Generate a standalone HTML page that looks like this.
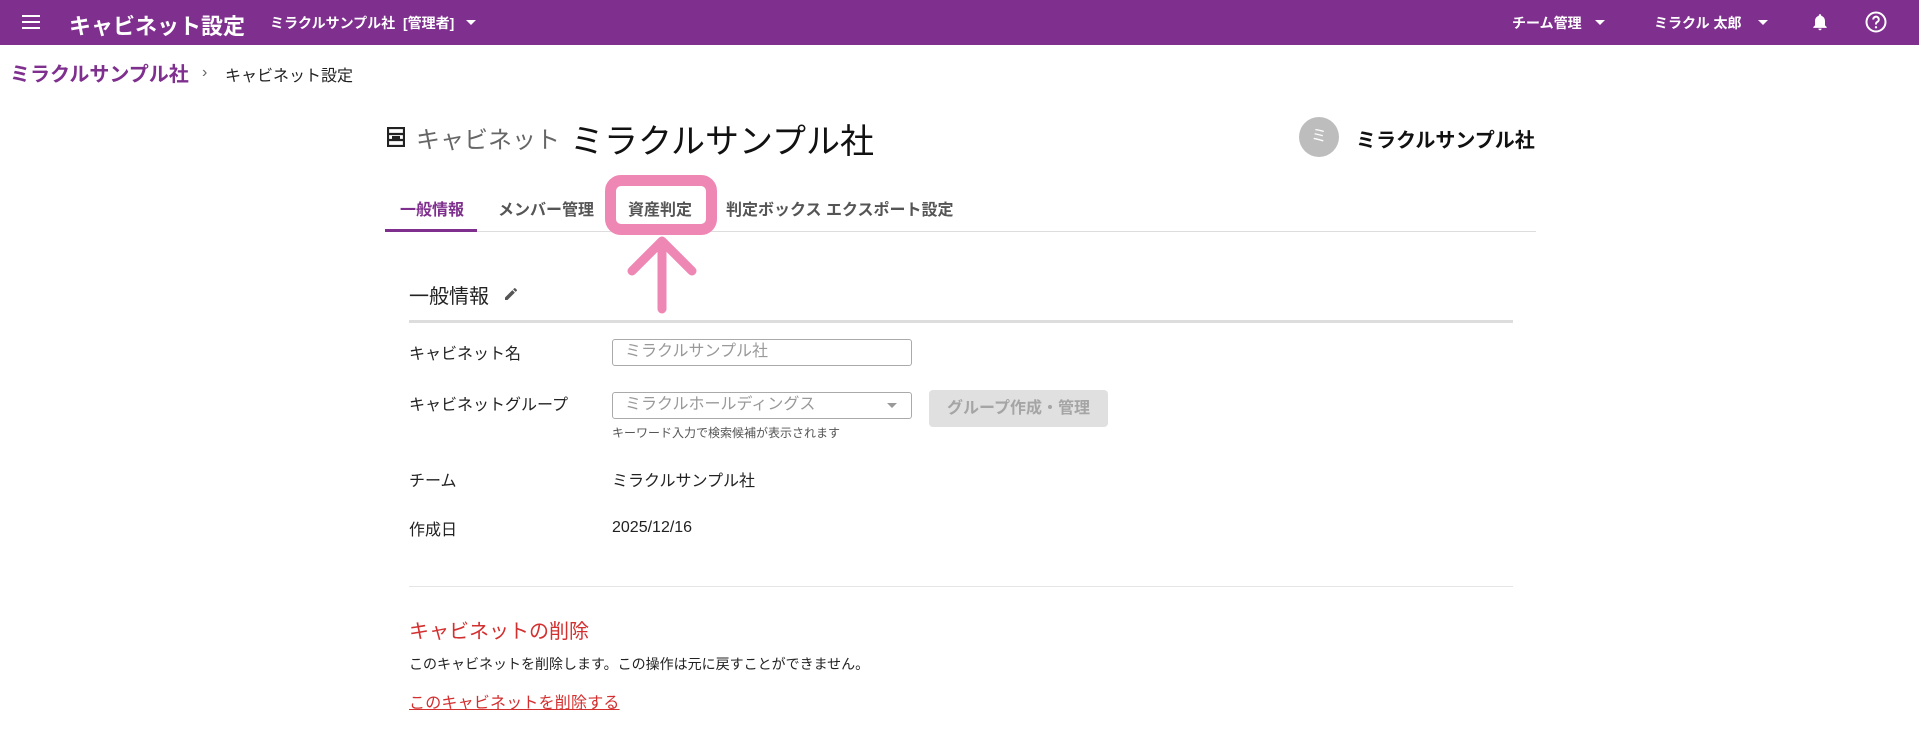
<!DOCTYPE html>
<html><head><meta charset="utf-8"><style>
*{margin:0;padding:0;box-sizing:border-box}
body{width:1919px;height:737px;overflow:hidden;background:#fff;font-family:"Liberation Sans","Noto Sans CJK JP",sans-serif;color:#222;position:relative}
.a{position:absolute;white-space:nowrap}
.hdr{position:absolute;left:0;top:0;width:1919px;height:45px;background:#7f2f8e;color:#fff}
.caret{position:absolute;width:0;height:0;border-left:5px solid transparent;border-right:5px solid transparent;border-top:5px solid #fff}
.lbl{font-size:16px;color:#222}
</style></head><body>
<div class="hdr">
 <div class="a" style="left:22px;top:15px;width:18px;height:2px;background:#fff"></div>
 <div class="a" style="left:22px;top:21px;width:18px;height:2px;background:#fff"></div>
 <div class="a" style="left:22px;top:27px;width:18px;height:2px;background:#fff"></div>
 <div class="a" style="left:69px;top:9px;font-size:22px;font-weight:bold">キャビネット設定</div>
 <div class="a" style="left:270px;top:13px;font-size:14px;font-weight:bold">ミラクルサンプル社&nbsp; [管理者]</div>
 <div class="caret" style="left:466px;top:20px"></div>
 <div class="a" style="left:1512px;top:13px;font-size:14px;font-weight:bold">チーム管理</div>
 <div class="caret" style="left:1595px;top:20px"></div>
 <div class="a" style="left:1654px;top:13px;font-size:14px;font-weight:bold">ミラクル 太郎</div>
 <div class="caret" style="left:1758px;top:20px"></div>
 <svg class="a" style="left:1810px;top:11px" width="20" height="22" viewBox="0 0 24 24"><path fill="#fff" d="M12 22c1.1 0 2-.9 2-2h-4c0 1.1.9 2 2 2zm6-6v-5c0-3.070-1.64-5.640-4.5-6.320V4c0-.83-.67-1.5-1.5-1.5s-1.5.67-1.5 1.5v.68C7.63 5.36 6 7.92 6 11v5l-2 2v1h16v-1l-2-2z"/></svg>
 <svg class="a" style="left:1864px;top:10px" width="24" height="24" viewBox="0 0 24 24"><circle cx="12" cy="12" r="9.5" fill="none" stroke="#fff" stroke-width="2"/><path d="M9.2 9.5a2.8 2.8 0 1 1 4 2.5c-.9.5-1.2 1-1.2 2v.5" fill="none" stroke="#fff" stroke-width="2"/><circle cx="12" cy="17.3" r="1.2" fill="#fff"/></svg>
</div>
<div class="a" style="left:10px;top:58px;font-size:20px;font-weight:bold;color:#7f2f8e">ミラクルサンプル社</div>
<div class="a" style="left:202px;top:64px;font-size:16px;color:#666">›</div>
<div class="a" style="left:225px;top:62px;font-size:16px;color:#222">キャビネット設定</div>

<svg class="a" style="left:387px;top:127px" width="18" height="20" viewBox="0 0 18 20"><path d="M1 1h16v18H1z M1 7h16 M1 13h16" fill="none" stroke="#222" stroke-width="2.2"/><rect x="5" y="9" width="8" height="3" fill="#222"/></svg>
<div class="a" style="left:416px;top:120px;font-size:24px;color:#666">キャビネット</div>
<div class="a" style="left:570px;top:114px;font-size:34px;color:#111">ミラクルサンプル社</div>
<div class="a" style="left:1299px;top:117px;width:40px;height:40px;border-radius:50%;background:#bdbdbd;color:#fff;font-size:16px;text-align:center;line-height:40px">ミ</div>
<div class="a" style="left:1356px;top:124px;font-size:20px;font-weight:bold;color:#111">ミラクルサンプル社</div>

<div class="a" style="left:385px;top:231px;width:1151px;height:1px;background:#ddd"></div>
<div class="a" style="left:385px;top:229px;width:92px;height:3px;background:#7f2f8e"></div>
<div class="a" style="left:400px;top:196px;font-size:16px;font-weight:bold;color:#7f2f8e">一般情報</div>
<div class="a" style="left:498px;top:196px;font-size:16px;font-weight:bold;color:#555">メンバー管理</div>
<div class="a" style="left:628px;top:196px;font-size:16px;font-weight:bold;color:#555">資産判定</div>
<div class="a" style="left:726px;top:196px;font-size:16px;font-weight:bold;color:#555">判定ボックス エクスポート設定</div>

<div class="a" style="left:605px;top:175px;width:112px;height:60px;border:11px solid #ef87b4;border-radius:16px"></div>
<svg class="a" style="left:620px;top:235px" width="90" height="82"><g stroke="#ef87b4" stroke-width="9" stroke-linecap="round" fill="none"><path d="M42 6V74 M42 6L12 36 M42 6L72 36"/></g></svg>

<div class="a" style="left:409px;top:280px;font-size:20px;color:#222">一般情報</div>
<svg class="a" style="left:503px;top:286px" width="16" height="16" viewBox="0 0 24 24"><path fill="#555" d="M3 17.25V21h3.75L17.81 9.94l-3.75-3.75L3 17.25zM20.71 7.04a1 1 0 0 0 0-1.41l-2.34-2.34a1 1 0 0 0-1.41 0l-1.830 1.830 3.750 3.750 1.830-1.830z"/></svg>
<div class="a" style="left:409px;top:320px;width:1104px;height:3px;background:#ddd"></div>

<div class="a lbl" style="left:409px;top:340px">キャビネット名</div>
<div class="a" style="left:612px;top:339px;width:300px;height:27px;border:1px solid #aaa;border-radius:3px;font-size:16px;color:#999;padding:0 12px;line-height:24px">ミラクルサンプル社</div>
<div class="a lbl" style="left:409px;top:391px">キャビネットグループ</div>
<div class="a" style="left:612px;top:392px;width:300px;height:27px;border:1px solid #aaa;border-radius:3px;font-size:16px;color:#999;padding:0 12px;line-height:24px">ミラクルホールディングス</div>
<div class="caret" style="left:887px;top:403px;border-top-color:#999"></div>
<div class="a" style="left:612px;top:424px;font-size:12px;color:#555">キーワード入力で検索候補が表示されます</div>
<div class="a" style="left:929px;top:390px;width:179px;height:37px;background:#e0e0e0;border-radius:4px;font-size:16px;font-weight:bold;color:#a5a5a5;text-align:center;line-height:37px">グループ作成・管理</div>
<div class="a lbl" style="left:409px;top:467px">チーム</div>
<div class="a lbl" style="left:612px;top:467px">ミラクルサンプル社</div>
<div class="a lbl" style="left:409px;top:516px">作成日</div>
<div class="a lbl" style="left:612px;top:519px">2025/12/16</div>

<div class="a" style="left:409px;top:586px;width:1104px;height:1px;background:#e5e5e5"></div>
<div class="a" style="left:409px;top:615px;font-size:20px;color:#d32f2f">キャビネットの削除</div>
<div class="a" style="left:409px;top:654px;font-size:14px;color:#222">このキャビネットを削除します。この操作は元に戻すことができません。</div>
<div class="a" style="left:409px;top:689px;font-size:16px;letter-spacing:0.2px;color:#d32f2f;text-decoration:underline">このキャビネットを削除する</div>
</body></html>
